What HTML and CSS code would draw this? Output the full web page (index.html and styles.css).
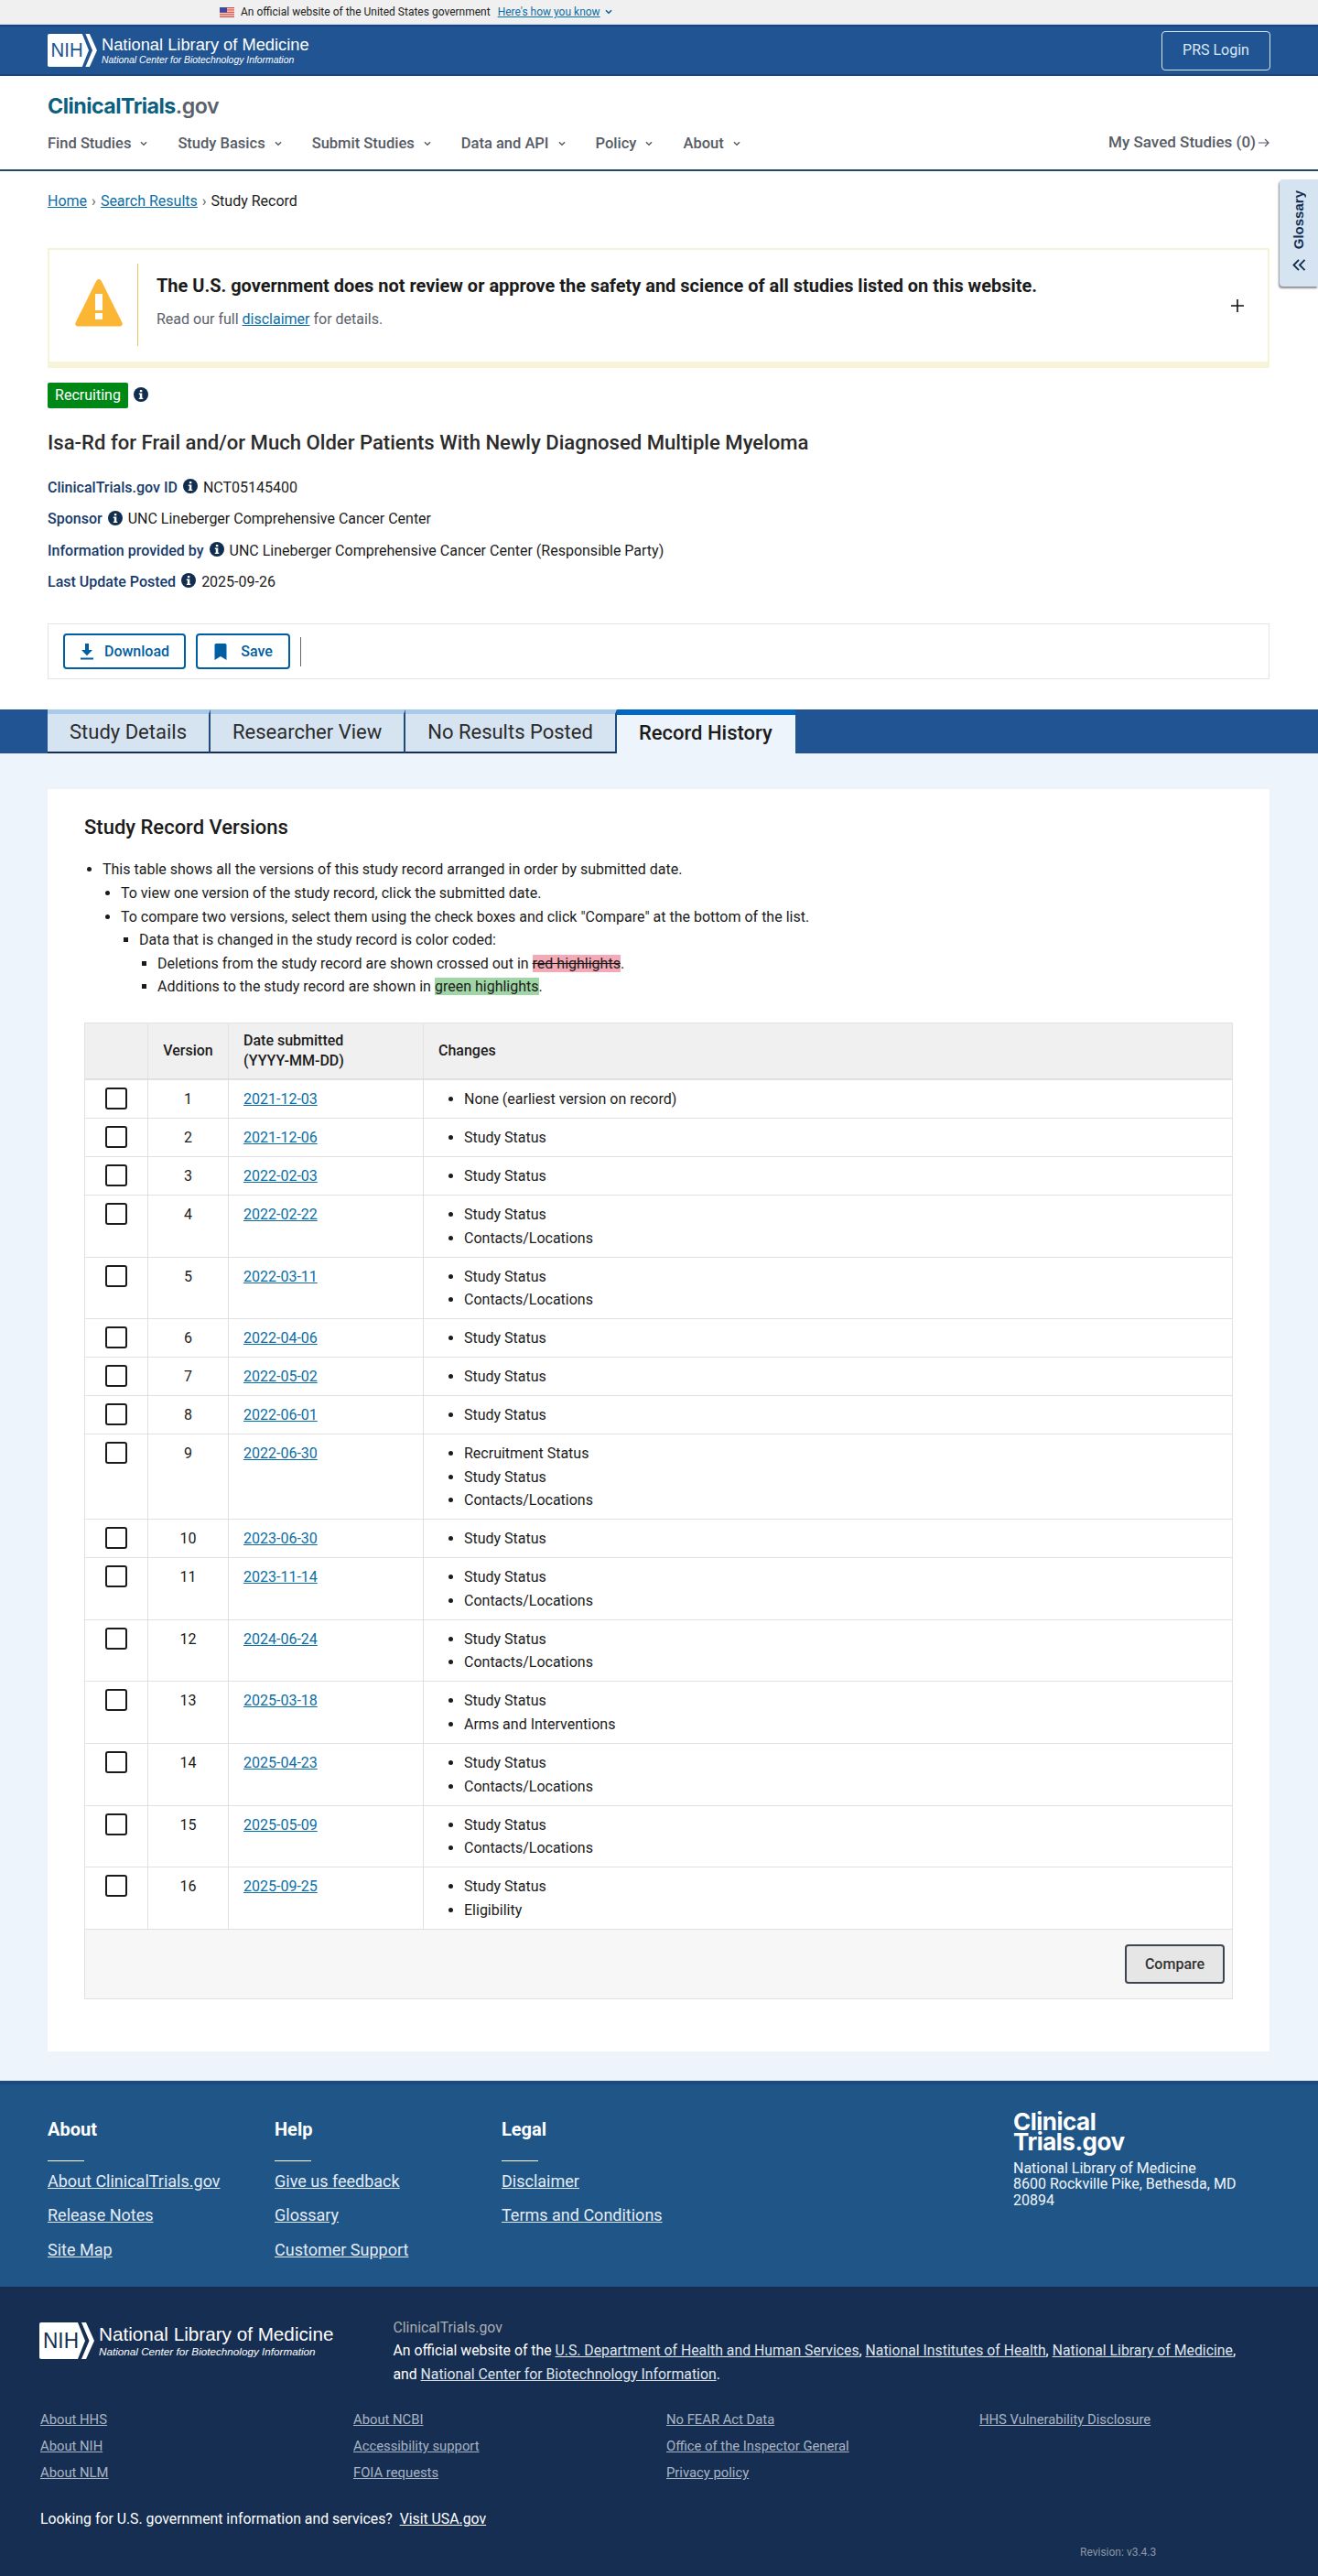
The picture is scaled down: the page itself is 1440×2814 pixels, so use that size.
FILE: index.html
```html
<!DOCTYPE html>
<html lang="en">
<head>
<meta charset="utf-8">
<title>Study Record | ClinicalTrials.gov</title>
<link rel="stylesheet" href="styles.css">
</head>
<body>
<svg class="defs" width="0" height="0" aria-hidden="true">
  <symbol id="i-info" viewBox="0 0 16 16"><circle cx="8" cy="8" r="8" fill="#112e51"/><rect x="6.9" y="3" width="2.4" height="2.2" fill="#fff"/><path d="M5.8 6.6h3.5v5.2h1v1.3H5.8v-1.3h1V7.9h-1z" fill="#fff"/></symbol>
  <symbol id="i-chev" viewBox="0 0 10 7"><path d="M1.2 1.2 5 5 8.8 1.2" fill="none" stroke="currentColor" stroke-width="1.8"/></symbol>
</svg>

<div class="gov-banner">
  <svg class="flag" width="16" height="11" viewBox="0 0 16 11"><rect width="16" height="11" fill="#fff"/><path d="M0 .5h16M0 2.2h16M0 3.9h16M0 5.6h16M0 7.3h16M0 9h16M0 10.6h16" stroke="#d0352b" stroke-width=".9"/><rect width="8" height="5.6" fill="#3c4a9a"/></svg>
  <span>An official website of the United States government</span>
  <a class="how" href="#">Here's how you know</a>
  <svg class="how-chev" width="8" height="6"><use href="#i-chev"/></svg>
</div>

<header class="nih-bar">
  <a class="nih-logo" href="#">
    <svg class="nih-mark" width="54" height="36" viewBox="0 0 60 40"><path d="M2 0H42L50 20 42 40H2a2 2 0 0 1-2-2V2a2 2 0 0 1 2-2z" fill="#fff"/><path d="M46 0H51L60 20 51 40H46L54.500 20z" fill="#fff"/><text x="4" y="28" font-family="Liberation Sans" font-size="24" fill="#205493" textLength="39" lengthAdjust="spacingAndGlyphs">NIH</text></svg>
    <span class="nih-text"><b>National Library of Medicine</b><i>National Center for Biotechnology Information</i></span>
  </a>
  <a class="prs" href="#">PRS Login</a>
</header>

<div class="site-head">
  <a class="brand" href="#"><span>ClinicalTrials</span><em>.gov</em></a>
  <nav class="main-nav">
    <a href="#">Find Studies<svg width="8" height="6"><use href="#i-chev"/></svg></a>
    <a href="#">Study Basics<svg width="8" height="6"><use href="#i-chev"/></svg></a>
    <a href="#">Submit Studies<svg width="8" height="6"><use href="#i-chev"/></svg></a>
    <a href="#">Data and API<svg width="8" height="6"><use href="#i-chev"/></svg></a>
    <a href="#">Policy<svg width="8" height="6"><use href="#i-chev"/></svg></a>
    <a href="#">About<svg width="8" height="6"><use href="#i-chev"/></svg></a>
    <a class="saved" href="#">My Saved Studies (0)<svg width="14" height="12" viewBox="0 0 14 12"><path d="M1 6h11M8 2l4 4-4 4" fill="none" stroke="currentColor" stroke-width="1.2"/></svg></a>
  </nav>
</div>

<aside class="glossary">
  <span>Glossary</span>
  <svg width="15" height="13" viewBox="0 0 16 14"><path d="M7.500 1 1.500 7l6 6M14.500 1 8.500 7l6 6" fill="none" stroke="#112e51" stroke-width="2"/></svg>
</aside>

<main class="record-top">
  <div class="crumbs"><a href="#">Home</a><i>›</i><a href="#">Search Results</a><i>›</i><span>Study Record</span></div>

  <section class="alert">
    <div class="alert-icon">
      <svg width="52" height="52" viewBox="0 0 52 52"><path d="M26 0c1.300 0 2.200.8 2.800 2L51.500 47.500c.9 2-.3 4-2.300 4H2.800c-2 0-3.200-2-2.300-4L23.200 2c.6-1.200 1.500-2 2.800-2z" fill="#fbb733"/><rect x="22" y="16" width="8" height="18" fill="#fff"/><rect x="22" y="37" width="8" height="7" fill="#fff"/></svg>
    </div>
    <div class="alert-body">
      <h2>The U.S. government does not review or approve the safety and science of all studies listed on this website.</h2>
      <p>Read our full <a href="#">disclaimer</a> for details.</p>
    </div>
    <svg class="plus" width="14" height="14" viewBox="0 0 14 14"><path d="M7 0v14M0 7h14" stroke="#111" stroke-width="1.600"/></svg>
  </section>

  <div class="status"><span class="badge">Recruiting</span><svg class="info" width="16" height="16"><use href="#i-info"/></svg></div>
  <h1 class="study-title">Isa-Rd for Frail and/or Much Older Patients With Newly Diagnosed Multiple Myeloma</h1>

  <dl class="meta">
    <div><dt>ClinicalTrials.gov ID</dt><svg class="info" width="16" height="16"><use href="#i-info"/></svg><dd>NCT05145400</dd></div>
    <div><dt>Sponsor</dt><svg class="info" width="16" height="16"><use href="#i-info"/></svg><dd>UNC Lineberger Comprehensive Cancer Center</dd></div>
    <div><dt>Information provided by</dt><svg class="info" width="16" height="16"><use href="#i-info"/></svg><dd>UNC Lineberger Comprehensive Cancer Center (Responsible Party)</dd></div>
    <div><dt>Last Update Posted</dt><svg class="info" width="16" height="16"><use href="#i-info"/></svg><dd>2025-09-26</dd></div>
  </dl>

  <div class="actions">
    <a class="act-btn act-dl" href="#"><svg width="16" height="18" viewBox="0 0 16 18"><path d="M6 0h4v7h4L8 13.200 2 7h4zM1 15.500h14V17.500H1z" fill="#005ea2"/></svg>Download</a>
    <a class="act-btn act-save" href="#"><svg width="16" height="18" viewBox="0 0 16 18"><path d="M1.500 1.500A1.500 1.500 0 0 1 3 0h10a1.500 1.500 0 0 1 1.500 1.500V18L8 14 1.500 18z" fill="#005ea2"/></svg>Save</a>
    <span class="act-sep"></span>
  </div>
</main>

<nav class="tabs">
  <a href="#">Study Details</a>
  <a href="#">Researcher View</a>
  <a href="#">No Results Posted</a>
  <a class="active" href="#">Record History</a>
</nav>

<div class="content">
  <section class="card">
    <h2 class="card-title">Study Record Versions</h2>
    <ul class="l1">
      <li>This table shows all the versions of this study record arranged in order by submitted date.
        <ul class="l2">
          <li>To view one version of the study record, click the submitted date.</li>
          <li>To compare two versions, select them using the check boxes and click "Compare" at the bottom of the list.
            <ul class="l3">
              <li>Data that is changed in the study record is color coded:
                <ul class="l4">
                  <li>Deletions from the study record are shown crossed out in <del>red highlights</del>.</li>
                  <li>Additions to the study record are shown in <ins>green highlights</ins>.</li>
                </ul>
              </li>
            </ul>
          </li>
        </ul>
      </li>
    </ul>

    <table class="versions">
      <colgroup><col class="c-check"><col class="c-ver"><col class="c-date"><col></colgroup>
      <thead>
        <tr><th></th><th class="ver">Version</th><th>Date submitted<br>(YYYY-MM-DD)</th><th>Changes</th></tr>
      </thead>
      <tbody>
        <tr><td class="chk"><span class="box"></span></td><td class="ver">1</td><td><a href="#">2021-12-03</a></td><td><ul><li>None (earliest version on record)</li></ul></td></tr>
        <tr><td class="chk"><span class="box"></span></td><td class="ver">2</td><td><a href="#">2021-12-06</a></td><td><ul><li>Study Status</li></ul></td></tr>
        <tr><td class="chk"><span class="box"></span></td><td class="ver">3</td><td><a href="#">2022-02-03</a></td><td><ul><li>Study Status</li></ul></td></tr>
        <tr><td class="chk"><span class="box"></span></td><td class="ver">4</td><td><a href="#">2022-02-22</a></td><td><ul><li>Study Status</li><li>Contacts/Locations</li></ul></td></tr>
        <tr><td class="chk"><span class="box"></span></td><td class="ver">5</td><td><a href="#">2022-03-11</a></td><td><ul><li>Study Status</li><li>Contacts/Locations</li></ul></td></tr>
        <tr><td class="chk"><span class="box"></span></td><td class="ver">6</td><td><a href="#">2022-04-06</a></td><td><ul><li>Study Status</li></ul></td></tr>
        <tr><td class="chk"><span class="box"></span></td><td class="ver">7</td><td><a href="#">2022-05-02</a></td><td><ul><li>Study Status</li></ul></td></tr>
        <tr><td class="chk"><span class="box"></span></td><td class="ver">8</td><td><a href="#">2022-06-01</a></td><td><ul><li>Study Status</li></ul></td></tr>
        <tr><td class="chk"><span class="box"></span></td><td class="ver">9</td><td><a href="#">2022-06-30</a></td><td><ul><li>Recruitment Status</li><li>Study Status</li><li>Contacts/Locations</li></ul></td></tr>
        <tr><td class="chk"><span class="box"></span></td><td class="ver">10</td><td><a href="#">2023-06-30</a></td><td><ul><li>Study Status</li></ul></td></tr>
        <tr><td class="chk"><span class="box"></span></td><td class="ver">11</td><td><a href="#">2023-11-14</a></td><td><ul><li>Study Status</li><li>Contacts/Locations</li></ul></td></tr>
        <tr><td class="chk"><span class="box"></span></td><td class="ver">12</td><td><a href="#">2024-06-24</a></td><td><ul><li>Study Status</li><li>Contacts/Locations</li></ul></td></tr>
        <tr><td class="chk"><span class="box"></span></td><td class="ver">13</td><td><a href="#">2025-03-18</a></td><td><ul><li>Study Status</li><li>Arms and Interventions</li></ul></td></tr>
        <tr><td class="chk"><span class="box"></span></td><td class="ver">14</td><td><a href="#">2025-04-23</a></td><td><ul><li>Study Status</li><li>Contacts/Locations</li></ul></td></tr>
        <tr><td class="chk"><span class="box"></span></td><td class="ver">15</td><td><a href="#">2025-05-09</a></td><td><ul><li>Study Status</li><li>Contacts/Locations</li></ul></td></tr>
        <tr><td class="chk"><span class="box"></span></td><td class="ver">16</td><td><a href="#">2025-09-25</a></td><td><ul><li>Study Status</li><li>Eligibility</li></ul></td></tr>
      </tbody>
      <tfoot>
        <tr><td colspan="4"><button class="compare" type="button">Compare</button></td></tr>
      </tfoot>
    </table>
  </section>
</div>

<footer>
  <div class="foot-top">
    <div class="foot-col">
      <h3>About</h3>
      <a href="#">About ClinicalTrials.gov</a>
      <a href="#">Release Notes</a>
      <a href="#">Site Map</a>
    </div>
    <div class="foot-col">
      <h3>Help</h3>
      <a href="#">Give us feedback</a>
      <a href="#">Glossary</a>
      <a href="#">Customer Support</a>
    </div>
    <div class="foot-col">
      <h3>Legal</h3>
      <a href="#">Disclaimer</a>
      <a href="#">Terms and Conditions</a>
    </div>
    <div class="foot-addr">
      <div class="foot-brand">Clinical<br>Trials.gov</div>
      <p>National Library of Medicine<br>8600 Rockville Pike, Bethesda, MD 20894</p>
    </div>
  </div>
  <div class="foot-bottom">
    <div class="foot-id">
      <a class="nih-logo big" href="#">
        <svg class="nih-mark" width="60" height="40" viewBox="0 0 60 40"><path d="M2 0H42L50 20 42 40H2a2 2 0 0 1-2-2V2a2 2 0 0 1 2-2z" fill="#fff"/><path d="M46 0H51L60 20 51 40H46L54.500 20z" fill="#fff"/><text x="4" y="28" font-family="Liberation Sans" font-size="24" fill="#162e51" textLength="39" lengthAdjust="spacingAndGlyphs">NIH</text></svg>
        <span class="nih-text"><b>National Library of Medicine</b><i>National Center for Biotechnology Information</i></span>
      </a>
      <div class="foot-official">
        <div class="ct">ClinicalTrials.gov</div>
        <p>An official website of the <a href="#">U.S. Department of Health and Human Services</a>, <a href="#">National Institutes of Health</a>, <a href="#">National Library of Medicine</a>, and <a href="#">National Center for Biotechnology Information</a>.</p>
      </div>
    </div>
    <div class="foot-links">
      <div><a href="#">About HHS</a><a href="#">About NIH</a><a href="#">About NLM</a></div>
      <div><a href="#">About NCBI</a><a href="#">Accessibility support</a><a href="#">FOIA requests</a></div>
      <div><a href="#">No FEAR Act Data</a><a href="#">Office of the Inspector General</a><a href="#">Privacy policy</a></div>
      <div><a href="#">HHS Vulnerability Disclosure</a></div>
    </div>
    <p class="usa">Looking for U.S. government information and services?&nbsp; <a href="#">Visit USA.gov</a></p>
    <div class="revision">Revision: v3.4.3</div>
  </div>
</footer>
</body>
</html>
```
FILE: styles.css
```css
* { box-sizing: border-box; }
html, body { margin: 0; padding: 0; }
body {
  position: relative;
  font-family: Roboto, "Liberation Sans", sans-serif;
  font-size: 16px;
  line-height: 25.6px;
  color: #1b1b1b;
  background: #fff;
}
a { color: #0b6ea6; }
.defs { position: absolute; }

/* gov banner */
.gov-banner {
  height: 27px;
  background: #f0f0f0;
  border-bottom: 1px solid #c5dff0;
  display: flex;
  align-items: center;
  padding-left: 240px;
  font-size: 12px;
  line-height: 26px;
}
.gov-banner .flag { margin-right: 7px; }
.gov-banner .how { margin-left: 8px; }
.how-chev { margin-left: 5px; color: #005ea2; }

/* NIH bar */
.nih-bar {
  height: 56px;
  background: #205493;
  border-top: 2px solid #1a4480;
  border-bottom: 2px solid #1a4480;
  display: flex;
  align-items: center;
  justify-content: space-between;
  padding: 0 52px;
}
.nih-logo { display: flex; align-items: center; text-decoration: none; color: #fff; }
.nih-text { display: flex; flex-direction: column; margin-left: 5px; font-family: "Liberation Sans", Arial, sans-serif; }
.nih-text b { font-weight: 400; font-size: 18.300px; line-height: 22px; }
.nih-text i { font-size: 10.400px; line-height: 12px; }
.prs {
  width: 119px;
  height: 43px;
  border: 1px solid #d9e8f6;
  border-radius: 4px;
  color: #d9e8f6;
  text-decoration: none;
  display: flex;
  align-items: center;
  justify-content: center;
  font-size: 16px;
}

/* site header */
.site-head {
  height: 104px;
  padding: 18px 52px 0;
  border-bottom: 2px solid #1f4a6e;
}
.brand {
  display: block;
  font-family: Inter, "Open Sans", sans-serif;
  font-size: 23.200px;
  line-height: 30px;
  font-weight: 700;
  letter-spacing: -.5px;
  text-decoration: none;
}
.brand span { color: #0b5f7f; }
.brand em { font-style: normal; color: #5b616b; font-weight: 600; }
.main-nav {
  display: flex;
  align-items: center;
  margin-top: 13px;
  font-weight: 500;
  font-size: 16.500px;
}
.main-nav a {
  display: flex;
  align-items: center;
  color: #565c65;
  text-decoration: none;
  margin-right: 33px;
  white-space: nowrap;
}
.main-nav a svg { margin-left: 10px; }
.main-nav .saved { margin: 0 0 0 auto; position: relative; top: -1px; font-size: 17px; }
.main-nav .saved svg { margin-left: 2px; }

/* glossary flyout */
.glossary {
  position: absolute;
  right: 0;
  top: 196px;
  width: 42px;
  height: 117px;
  background: #d6e4f2;
  border-radius: 4px 0 0 4px;
  box-shadow: -1px 2px 2px rgba(0,0,0,.45);
  display: flex;
  flex-direction: column;
  align-items: center;
  padding-top: 12px;
  gap: 11px;
  color: #112e51;
  font-family: "Liberation Sans", Arial, sans-serif;
  font-weight: 700;
  font-size: 15px;
  line-height: 20px;
}
.glossary span { writing-mode: vertical-rl; transform: rotate(180deg); }

/* top area */
.record-top { padding: 0 53px 33px 52px; }
.crumbs { padding-top: 20px; height: 84px; display: flex; align-items: flex-start; }
.crumbs i { font-style: normal; color: #5b616b; margin: 0 5px; }
.alert {
  position: relative;
  height: 131px;
  border: 2px solid #f7f3d6;
  border-bottom-width: 7px;
  display: flex;
  align-items: stretch;
  padding: 15px 0 17px 28px;
}
.alert-icon { width: 69px; border-right: 1px solid #e9c35a; padding-top: 17px; flex: none; }
.alert-body { padding: 9px 0 0 20px; }
.alert-body h2 { margin: 0; font-size: 19.950px; line-height: 30px; font-weight: 700; color: #1b1b1b; }
.alert-body p { margin: 9px 0 0; color: #5b616b; font-size: 16px; }
.plus { position: absolute; right: 26px; top: 54px; }

.status { display: flex; align-items: center; margin-top: 16px; height: 28px; }
.badge {
  width: 88px;
  height: 28px;
  background: #008817;
  color: #fff;
  border-radius: 2px;
  display: flex;
  align-items: center;
  justify-content: center;
}
.status .info { margin: -2px 0 0 6px; }
.study-title { margin: 22px 0 0; font-size: 22.100px; line-height: 30px; font-weight: 500; color: #2b2b2b; }
.meta { margin: 22px 0 0; }
.meta div { display: flex; align-items: center; height: 25.600px; margin-bottom: 8.700px; }
.meta div:last-child { margin-bottom: 0; }
.meta dt { font-weight: 500; color: #163a6b; }
.meta dd { margin: 0; }
.meta .info { margin: -3px 6px 0 6px; }

.actions {
  margin-top: 33px;
  height: 61px;
  border: 1px solid #e4e4e4;
  padding: 10px 16px;
  display: flex;
  gap: 11px;
}
.act-btn {
  height: 39px;
  border: 2px solid #005ea2;
  border-radius: 4px;
  display: flex;
  align-items: center;
  justify-content: center;
  text-decoration: none;
  font-weight: 500;
  color: #005ea2;
}
.act-dl { width: 134px; gap: 11px; }
.act-save { width: 103px; gap: 14px; }
.act-sep { width: 1px; height: 32px; background: #666; margin: 4px 0 0; }

/* tabs */
.tabs {
  height: 48px;
  background: #205493;
  padding-left: 52px;
  display: flex;
}
.tabs a {
  height: 48px;
  border-top: 5px solid #a9cbea;
  border-right: 2px solid #1f4a7a;
  border-bottom: 2px solid #162e51;
  background: #d6e4f2;
  color: #2b2b2b;
  text-decoration: none;
  font-size: 22px;
  line-height: 39px;
  padding: 0 24px;
  white-space: nowrap;
}
.tabs a.active {
  background: #edf4fb;
  border-top: 6px solid #0067c5;
  border-right: 0;
  border-bottom: 0;
  color: #1b1b1b;
  font-weight: 500;
  padding: 0 25px 0 24px;
}

/* content */
.content { background: #edf4fb; padding: 39px 53px 32px 52px; }
.card { background: #fff; padding: 25px 40px 57px; }
.card-title { margin: 0; font-size: 22px; line-height: 34px; font-weight: 500; color: #1b1b1b; }
.card ul { margin: 0; padding-left: 20px; }
.l1 { margin-top: 16px !important; }
.l1, .l2 { list-style: disc; }
.l3, .l4 { list-style: square; }
del { background: #f4a9b6; }
ins { background: #a0d5a6; text-decoration: none; }

.versions {
  width: 1255px;
  margin-top: 26px;
  border-collapse: collapse;
  table-layout: fixed;
}
.c-check { width: 69px; }
.c-ver { width: 88px; }
.c-date { width: 213px; }
.versions th, .versions td {
  border: 1px solid #dfe1e2;
  padding: 8px 8px 7.400px 8px;
  vertical-align: top;
  text-align: left;
}
.versions th {
  background: #f0f0f0;
  font-weight: 500;
  line-height: 22px;
  vertical-align: middle;
  padding: 8px 8px 8px 16px;
  border-bottom-width: 2px;
}
.versions tbody td { padding-left: 16px; }
.versions th.ver, .versions td.ver { text-align: center; padding-left: 8px; }
.versions tbody td.chk { padding: 8px 0 0 22px; }
.box {
  display: block;
  width: 24px;
  height: 24px;
  border: 2px solid #1b1b1b;
  border-radius: 3px;
  background: #fff;
}
.card .versions td ul { padding-left: 28px; list-style: disc; }
.versions tfoot td {
  background: #f7f7f7;
  padding: 16px 8px 16px;
  text-align: right;
}
.compare {
  display: block;
  margin-left: auto;
  width: 109px;
  height: 43px;
  background: #e6e6e6;
  border: 2px solid #3d4551;
  border-radius: 4px;
  font: 500 16px Roboto, sans-serif;
  color: #333;
}

/* footer */
.foot-top {
  height: 225px;
  background: #205587;
  border-top: 4px solid #1b4a82;
  padding: 33px 52px 0;
  display: flex;
  color: #fff;
}
.foot-col { width: 248px; display: flex; flex-direction: column; align-items: flex-start; }
.foot-col h3 {
  margin: 0 0 28px;
  font-size: 20px;
  line-height: 32px;
  font-weight: 700;
  padding-bottom: 0;
  position: relative;
}
.foot-col h3::after {
  content: "";
  position: absolute;
  left: 0;
  top: 50px;
  width: 40px;
  height: 1px;
  background: #fff;
}
.foot-col a { color: #e3ecf5; font-size: 18px; line-height: 26px; margin-bottom: 11.500px; }
.foot-addr { margin-left: 311px; width: 280px; margin-top: -3px; }
.foot-brand {
  font-family: Inter, "Open Sans", sans-serif;
  font-weight: 700;
  font-size: 26px;
  line-height: 22px;
  letter-spacing: -.5px;
}
.foot-addr p { margin: 9px 0 0; line-height: 17.500px; color: #f0f5fa; }

.foot-bottom {
  position: relative;
  height: 316px;
  background: #162e51;
  padding: 32px 44px 0;
  color: #fff;
}
.foot-id { display: flex; align-items: flex-start; }
.nih-logo.big { margin: 7px 0 0 -1px; }
.nih-logo.big .nih-text b { font-size: 20.700px; line-height: 24px; }
.nih-logo.big .nih-text i { font-size: 11.700px; line-height: 13px; }
.foot-official { margin-left: 65px; flex: 1; padding-right: 30px; font-size: 15.800px; }
.foot-official .ct { color: #a9aeb1; }
.foot-official p { margin: 0; color: #fff; }
.foot-official a { color: #dfe5ec; }
.foot-links { display: grid; grid-template-columns: repeat(4, 342px); margin-top: 27px; }
.foot-links div { display: flex; flex-direction: column; align-items: flex-start; gap: 9px; }
.foot-links a { color: #a9b5c4; font-size: 14.800px; line-height: 20px; }
.usa { margin: 28px 0 0; color: #fff; font-size: 15.800px; }
.usa a { color: #fff; }
.revision { position: absolute; left: 1180px; top: 282px; font-size: 12px; line-height: 16px; color: #8d97a5; }
```
